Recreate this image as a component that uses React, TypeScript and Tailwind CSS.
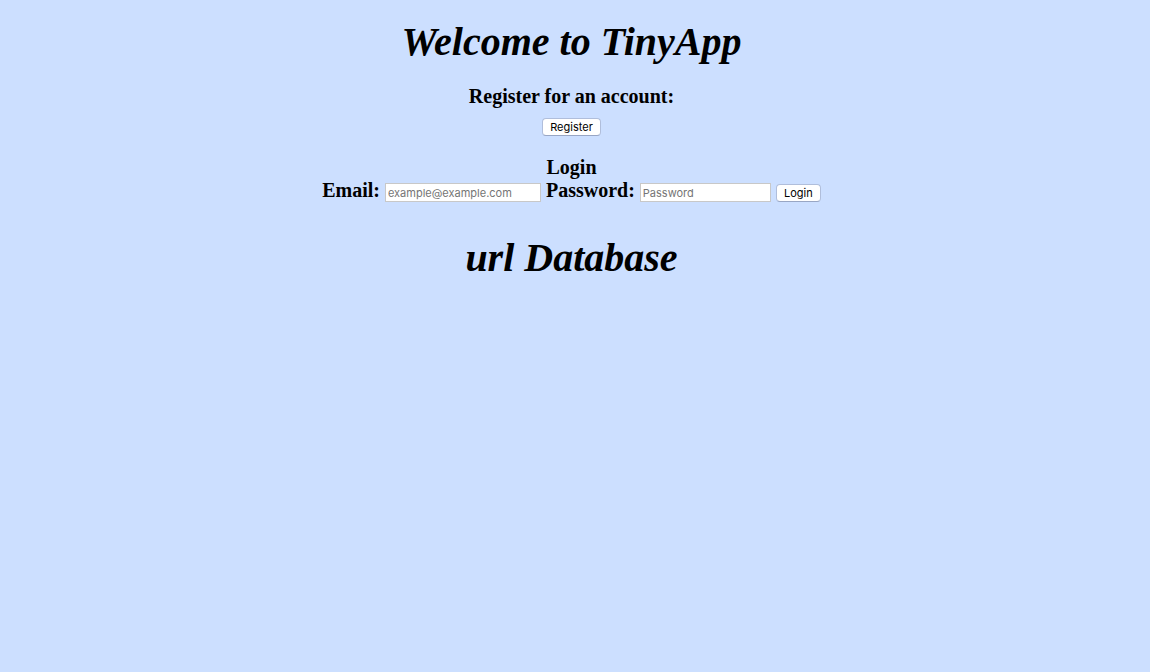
import React from "react";

const button =
  "h-[18px] rounded-[4px] border border-[#b0bedb] border-b-[#98a6c4] bg-white text-center font-['Inter','Liberation_Sans',sans-serif] text-[11px] leading-4 font-normal text-black";
const field =
  "h-[19px] border border-[#c8c8c8] bg-white px-[2px] pt-px font-['Inter','Liberation_Sans',sans-serif] text-[11px] leading-4 font-normal text-black outline-none placeholder:text-[#757575]";

export default function App() {
  return (
    <main className="flex min-h-screen flex-col items-center bg-[#ccdfff] pt-[19px] pr-[7px] font-['Liberation_Serif',serif] text-xl leading-[23px] font-bold text-black">
      <h1 className="text-[40px] leading-[45px] italic">Welcome to TinyApp</h1>
      <p className="mt-[21px]">Register for an account:</p>
      <button type="button" className={`${button} mt-[10px] w-[59px]`}>
        Register
      </button>
      <h2 className="mt-5">Login</h2>
      <form className="flex flex-wrap items-baseline justify-center gap-[5px]" onSubmit={(e) => e.preventDefault()}>
        <label htmlFor="email">Email:</label>
        <input id="email" type="email" placeholder="example@example.com" className={`${field} w-[156px]`} />
        <label htmlFor="password">Password:</label>
        <input id="password" type="password" placeholder="Password" className={`${field} w-[131px]`} />
        <button type="submit" className={`${button} w-[45px]`}>
          Login
        </button>
      </form>
      <h1 className="mt-[33px] text-[40px] leading-[45px] italic">url Database</h1>
    </main>
  );
}
